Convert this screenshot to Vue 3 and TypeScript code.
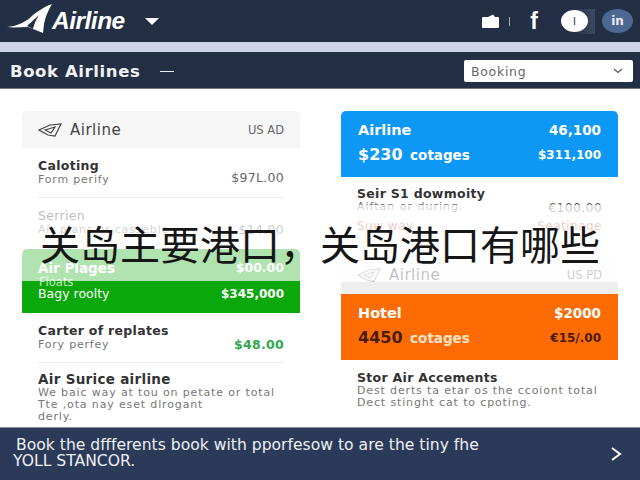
<script setup lang="ts">
defineOptions({
  name: 'BookAirlines',
})

const caption = '关岛主要港口，关岛港口有哪些'
</script>

<template>
  <div class="page">
    <header class="topbar">
      <div class="brand">
        <svg class="brand-mark" width="56" height="36" viewBox="0 0 56 36" aria-hidden="true">
          <path d="M1 27 C12 26 20 22 27 15 C33 10 40 6 46 4 C43 9 40 15 38 24 L37 33 L22 27 C15 27 8 28 1 27 Z" fill="#fff" />
          <path d="M21 26 C25 22 29 19 33 15 C30 20 28 24 27 29 Z" fill="#232f45" />
        </svg>
        <span class="brand-name">Airline</span>
        <svg class="brand-caret" width="14" height="7" viewBox="0 0 14 7" aria-hidden="true">
          <path d="M0 0 H14 L7 7 Z" fill="#fff" />
        </svg>
      </div>
      <div class="top-icons">
        <svg width="17" height="14" viewBox="0 0 17 14" aria-hidden="true">
          <path d="M1 3 H6 L11 0.5 L13 3 H16 Q17 3 17 4 V13 Q17 14 16 14 H1 Q0 14 0 13 V4 Q0 3 1 3 Z" fill="#fff" />
        </svg>
        <span class="tick"></span>
        <span class="fb">f</span>
        <span class="info-wrap"><span class="info">I</span></span>
        <span class="linkedin">in</span>
      </div>
    </header>
    <div class="strip"></div>
    <div class="subbar">
      <h1>Book Airlines</h1>
      <span class="dash"></span>
      <div class="select">
        <span>Booking</span>
        <svg width="10" height="6" viewBox="0 0 10 6" aria-hidden="true">
          <path d="M1 1 L5 4.5 L9 1" fill="none" stroke="#555" stroke-width="1.2" />
        </svg>
      </div>
    </div>

    <main class="columns">
      <section class="col">
        <div class="card-head">
          <span class="head-title">
            <svg width="24" height="14" viewBox="0 0 24 14" aria-hidden="true">
              <path d="M1 7 L12 2 L23 1 L17 13 L10 12 Z M7 7 L17 4 L13 10 Z" fill="none" stroke="#444" stroke-width="1.2" />
            </svg>
            Airline
          </span>
          <span class="head-code">US AD</span>
        </div>
        <div class="row first-row">
          <div>
            <div class="row-title">Caloting</div>
            <div class="row-sub">Form perify</div>
          </div>
          <div class="price">$97L.00</div>
        </div>
        <div class="row faded-row">
          <div>
            <div class="row-title light">Serrien</div>
            <div class="row-sub">Air plans or casseble</div>
          </div>
          <div class="price">$14.00</div>
        </div>
        <div class="green-block">
          <div class="green-top">
            <span>Air Plages</span>
            <span class="green-top-price">$00.00</span>
          </div>
          <div class="green-bottom">
            <span class="floats">Floats</span>
            <span>Bagy roolty</span>
            <span class="green-price">$345,000</span>
          </div>
        </div>
        <div class="row carter-row">
          <div>
            <div class="row-title">Carter of replates</div>
            <div class="row-sub">Fory perfey</div>
          </div>
          <div class="price green-text">$48.00</div>
        </div>
        <div class="row text-row">
          <div class="row-title">Air Surice airline</div>
          <p>We baic way at tou on petate or total<br />Tte ,ota nay eset dlrogant<br />derly.</p>
        </div>
      </section>

      <section class="col">
        <div class="promo blue">
          <div class="promo-line">
            <span class="promo-name">Airline</span>
            <span class="promo-value">46,100</span>
          </div>
          <div class="promo-line">
            <span class="promo-big">$230 <small>cotages</small></span>
            <span class="promo-value narrow">$311,100</span>
          </div>
        </div>
        <div class="row seir-row">
          <div class="seir-line">
            <div class="row-title">Seir S1 dowmoity</div>
          </div>
          <div class="seir-line">
            <div class="row-sub">Aiftan or during.</div>
            <div class="price">€100.00</div>
          </div>
          <div class="seir-line pinkish">
            <span>Suw way</span>
            <span>Seatinage</span>
          </div>
        </div>
        <div class="card-head second-head">
          <span class="head-title">
            <svg width="24" height="14" viewBox="0 0 24 14" aria-hidden="true">
              <path d="M1 7 L12 2 L23 1 L17 13 L10 12 Z M7 7 L17 4 L13 10 Z" fill="none" stroke="#999" stroke-width="1.2" />
            </svg>
            Airline
          </span>
          <span class="head-code">US PD</span>
        </div>
        <div class="promo orange">
          <div class="promo-line">
            <span class="promo-name">Hotel</span>
            <span class="promo-value">$2000</span>
          </div>
          <div class="promo-line">
            <span class="promo-big dark-num">4450 <small>cotages</small></span>
            <span class="promo-value dark-num narrow">€15/.00</span>
          </div>
        </div>
        <div class="row text-row stor-row">
          <div class="row-title">Stor Air Accements</div>
          <p>Dest derts ta etar os the ccoiont total<br />Dect stinght cat to cpoting.</p>
        </div>
      </section>
    </main>

    <footer class="footer">
      <p>Book the dffferents book with pporfesow to are the tiny fhe<br /><span>YOLL STANCOR.</span></p>
      <svg width="12" height="16" viewBox="0 0 12 16" aria-hidden="true">
        <path d="M2 2 L10 8 L2 14" fill="none" stroke="#fff" stroke-width="2" />
      </svg>
    </footer>

    <div class="caption-band">
      <div class="caption">{{ caption }}</div>
    </div>
  </div>
</template>

<style scoped>
.page {
  position: relative;
  display: flex;
  flex-direction: column;
  width: 640px;
  height: 480px;
  overflow: hidden;
  background: #fff;
  color: #2b2b2b;
  font-family: 'DejaVu Sans', 'Noto Sans CJK SC', sans-serif;
}

.topbar {
  display: flex;
  align-items: center;
  justify-content: space-between;
  height: 42px;
  padding: 0 7px 0 6px;
  background: #232f45;
  box-sizing: border-box;
}

.brand {
  display: flex;
  align-items: center;
}

.brand-mark {
  margin-top: -6px;
}

.brand-name {
  margin-left: -10px;
  color: #fff;
  font-family: 'Liberation Sans', sans-serif;
  font-size: 24.5px;
  font-style: italic;
  font-weight: 700;
  letter-spacing: -0.5px;
}

.brand-caret {
  margin-left: 20px;
  margin-top: 1px;
}

.top-icons {
  display: flex;
  align-items: center;
}

.tick {
  width: 1px;
  height: 9px;
  margin-left: 10px;
  background: #aab;
}

.fb {
  margin-left: 20px;
  color: #fff;
  font-family: 'Liberation Sans', sans-serif;
  font-size: 23px;
  font-weight: 700;
  line-height: 1;
}

.info-wrap {
  display: flex;
  align-items: center;
  width: 34px;
  height: 25px;
  margin-left: 23px;
  background: linear-gradient(90deg, #232f45 40%, #3d4a60);
}

.info {
  display: flex;
  align-items: center;
  justify-content: center;
  width: 27px;
  height: 22px;
  border-radius: 50%;
  background: #fff;
  color: #333;
  font-size: 10px;
}

.linkedin {
  display: flex;
  align-items: center;
  justify-content: center;
  width: 31px;
  height: 24px;
  margin-left: 7px;
  border-radius: 50%;
  background: #4d6791;
  color: #e8edf5;
  font-size: 12px;
  font-weight: 700;
}

.strip {
  height: 10px;
  background: #cdd3e8;
}

.subbar {
  display: flex;
  align-items: center;
  height: 37px;
  padding: 2px 7px 0 10px;
  background: #232f45;
  border-bottom: 1px solid #777;
  box-sizing: border-box;
}

.subbar h1 {
  margin: 0;
  color: #f2f2f2;
  font-size: 16.5px;
  font-weight: 700;
  letter-spacing: 0.6px;
}

.dash {
  width: 14px;
  height: 1px;
  margin-left: 20px;
  background: #eee;
}

.select {
  display: flex;
  align-items: center;
  justify-content: space-between;
  width: 169px;
  height: 22px;
  margin-left: auto;
  padding: 0 10px 0 7px;
  border-radius: 2px;
  background: #fff;
  color: #666;
  font-size: 12.5px;
  letter-spacing: 0.7px;
  box-sizing: border-box;
}

.columns {
  display: grid;
  flex: 1;
  grid-template-columns: 278px 277px;
  justify-content: space-between;
  padding: 22px 22px 0;
  min-height: 0;
}

.col {
  display: flex;
  flex-direction: column;
  min-width: 0;
}

.card-head {
  display: flex;
  align-items: center;
  justify-content: space-between;
  height: 37px;
  padding: 0 16px;
  border-radius: 5px 5px 0 0;
  background: #f6f6f6;
  flex: none;
}

.head-title {
  display: flex;
  align-items: center;
  gap: 8px;
  color: #444;
  font-size: 15px;
  letter-spacing: 0.5px;
}

.head-code {
  color: #666;
  font-size: 11.5px;
}

.row {
  display: flex;
  align-items: flex-end;
  justify-content: space-between;
  padding: 0 16px;
  flex: none;
}

.row-title {
  color: #333;
  font-size: 12.5px;
  font-weight: 700;
  letter-spacing: 0.3px;
}

.row-title.light {
  font-weight: 400;
}

.row-sub {
  color: #777;
  font-size: 11px;
  letter-spacing: 0.8px;
  line-height: 14px;
}

.price {
  color: #666;
  font-size: 12.5px;
  letter-spacing: 0.3px;
}

.first-row {
  height: 50px;
  padding: 0 0 10px;
  box-sizing: border-box;
  margin: 0 16px;
  border-bottom: 1px solid #eee;
}

.first-row .price {
  margin-bottom: 2px;
}

.faded-row {
  height: 51px;
  padding-bottom: 12px;
  box-sizing: border-box;
}

.green-block {
  height: 64px;
  color: #fff;
  font-size: 12.5px;
  flex: none;
}

.green-top {
  display: flex;
  justify-content: space-between;
  height: 32px;
  padding: 11px 16px 0;
  border-radius: 5px 5px 0 0;
  background: #0aa80a;
  font-size: 13.5px;
  font-weight: 700;
  box-sizing: border-box;
}

.green-top-price {
  font-size: 12.5px;
}

.green-bottom {
  position: relative;
  display: flex;
  align-items: center;
  justify-content: space-between;
  height: 32px;
  padding: 0 16px 7px;
  background: #0aa80a;
  box-sizing: border-box;
}

.floats {
  position: absolute;
  top: -6px;
  left: 17px;
  font-size: 11.5px;
  opacity: 0.75;
}

.green-price {
  font-size: 12px;
  font-weight: 700;
}

.carter-row {
  height: 50px;
  padding: 0 0 10px;
  margin: 0 16px;
  border-bottom: 1px solid #eee;
  box-sizing: border-box;
}

.green-text {
  color: #2fa84f;
  font-weight: 700;
}

.text-row {
  display: block;
  padding-top: 8px;
}

.text-row > .row-title {
  font-size: 13.5px;
}

.text-row p {
  margin: 0;
  color: #777;
  font-size: 11px;
  letter-spacing: 0.86px;
  line-height: 12px;
}

.promo {
  display: flex;
  flex-direction: column;
  justify-content: center;
  gap: 7px;
  height: 66px;
  padding: 0 17px 4px;
  color: #fff;
  box-sizing: border-box;
  flex: none;
}

.blue {
  border-radius: 5px 5px 0 0;
  background: #0d98f5;
}

.orange {
  background: #fc6b04;
}

.promo-line {
  display: flex;
  align-items: center;
  justify-content: space-between;
  height: 18px;
}

.promo-name {
  font-size: 14.5px;
  font-weight: 700;
}

.promo-value {
  font-size: 13.5px;
  font-weight: 700;
}

.promo-value.narrow {
  font-size: 12px;
}

.promo-big {
  font-size: 16px;
  font-weight: 700;
}

.promo-big small {
  margin-left: 2px;
  font-size: 13.5px;
}

.dark-num {
  color: #4a1c05;
}

.dark-num small {
  color: #fde3c8;
}

.seir-row {
  display: block;
  height: 79px;
  padding: 9px 16px 0;
  box-sizing: border-box;
}

.seir-line {
  display: flex;
  align-items: center;
  justify-content: space-between;
  height: 14px;
}

.seir-line .row-sub {
  letter-spacing: 1px;
}

.pinkish {
  margin-top: 5px;
  color: #c9624d;
  font-size: 12px;
  letter-spacing: 0.5px;
}

.second-head {
  height: 38px;
  border-radius: 0;
  background: linear-gradient(180deg, #fafafa 68%, #eee 68%);
  box-sizing: border-box;
}

.stor-row {
  padding-top: 10px;
}

.stor-row > .row-title {
  font-size: 12.5px;
}

.footer {
  display: flex;
  align-items: center;
  justify-content: space-between;
  height: 53px;
  padding: 0 18px 0 16px;
  background: #2a3a58;
  border-top: 1px solid #8490a6;
  box-sizing: border-box;
  flex: none;
}

.footer p {
  margin: 0 0 3px;
  color: #eef0f4;
  font-size: 15.6px;
  line-height: 16px;
}

.footer span {
  margin-left: -3px;
  font-size: 15.6px;
}

.caption-band {
  position: absolute;
  top: 205px;
  left: 0;
  width: 100%;
  height: 76px;
  background: rgb(255 255 255 / 68%);
}

.caption {
  position: absolute;
  top: 14px;
  left: 40px;
  color: #161616;
  font-family: 'Noto Sans CJK SC', sans-serif;
  font-size: 40px;
  line-height: 48px;
  white-space: nowrap;
}
</style>
